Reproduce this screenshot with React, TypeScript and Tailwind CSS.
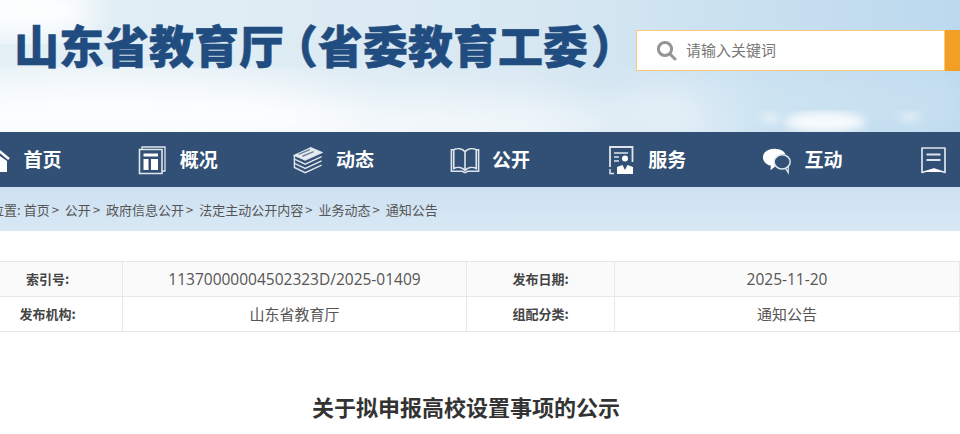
import React from "react";

const cjk = "font-['Noto_Sans_CJK_SC','Microsoft_YaHei',sans-serif]";

function Sky() {
  return (
    <svg className="absolute inset-0" width="960" height="132" viewBox="0 0 960 132" preserveAspectRatio="none">
      <defs>
        <linearGradient id="sky" x1="0" y1="0" x2="1" y2="0">
          <stop offset="0" stopColor="#e4f0f6" />
          <stop offset="0.55" stopColor="#d8e8f2" />
          <stop offset="1" stopColor="#bbd9ee" />
        </linearGradient>
        <filter id="b1"><feGaussianBlur stdDeviation="20" /></filter>
        <filter id="b2"><feGaussianBlur stdDeviation="4" /></filter>
        <filter id="b3"><feGaussianBlur stdDeviation="14" /></filter>
      </defs>
      <rect width="960" height="132" fill="url(#sky)" />
      <g filter="url(#b3)" fill="#ffffff">
        <ellipse cx="30" cy="10" rx="65" ry="28" opacity="0.95" />
      </g>
      <g filter="url(#b1)" fill="#ffffff">
        <ellipse cx="120" cy="115" rx="240" ry="40" opacity="0.9" />
        <ellipse cx="400" cy="125" rx="220" ry="30" opacity="0.7" />
        <ellipse cx="680" cy="115" rx="70" ry="25" opacity="0.55" />
      </g>
      <rect x="700" y="75" width="260" height="57" fill="#cfe5f3" opacity="0.55" filter="url(#b3)" />
      <g filter="url(#b2)" fill="#ffffff">
        <ellipse cx="825" cy="122" rx="40" ry="10" opacity="0.85" />
        <ellipse cx="770" cy="118" rx="10" ry="4" opacity="0.6" />
        <ellipse cx="910" cy="117" rx="11" ry="3.5" opacity="0.6" />
      </g>
    </svg>
  );
}

const W = "#dfe5ec";

const icons: Record<string, React.ReactNode> = {
  home: (
    <svg width="30" height="30" viewBox="0 0 30 30" fill="none">
      <path d="M6 14 L17 5 L28 14" stroke="#fff" strokeWidth="2.6" />
      <path d="M9 16 L17 9.5 L26 16 V27 H9 Z" fill="#fff" />
    </svg>
  ),
  overview: (
    <svg width="30" height="30" viewBox="0 0 30 30" fill="none" stroke={W} strokeWidth="1.3">
      <path d="M2.5 4.5 H25 V28.5 H2.5 Z" strokeWidth="1.6" />
      <path d="M5 4.5 V2 H28 V26 H25" />
      <path d="M6.5 8.5 H21 V11.5 H6.5 Z" fill="#fff" stroke="none" />
      <path d="M6.5 14 H11.5 V25 H6.5 Z" fill="#fff" stroke="none" />
      <path d="M14 14 H21 V25 H14 Z" fill="#fff" stroke="none" />
    </svg>
  ),
  stack: (
    <svg width="32" height="30" viewBox="0 0 32 30" fill="none" stroke={W} strokeWidth="1.5">
      <path d="M1.5 10 L19 2 L30.5 7 L13 15 Z" fill="#e8ecf1" />
      <path d="M6 9 L18 4 M10 11 L22 6" stroke="#6d839c" />
      <path d="M1.5 10 V14 L13 19.5 L30.5 11.5" />
      <path d="M1.5 14 V18.5 L13 24 L30.5 16" />
      <path d="M1.5 18.5 V23 L13 28.5 L30.5 20.5" />
    </svg>
  ),
  book: (
    <svg width="32" height="30" viewBox="0 0 32 30" fill="none" stroke={W} strokeWidth="1.7">
      <path d="M4 4 C8 2 13 3 16 6 C19 3 24 2 28 4 V24 C24 22 19 23 16 26 C13 23 8 22 4 24 Z" />
      <path d="M16 6 V26" />
      <path d="M4 4 H1.5 V27 H13 L16 28.5 L19 27 H30.5 V4 H28" />
    </svg>
  ),
  service: (
    <svg width="28" height="30" viewBox="0 0 28 30" fill="none" stroke={W} strokeWidth="1.5">
      <path d="M3 22 V2 H25.5 V17" strokeWidth="1.8" />
      <path d="M3 24 V28.5 H7" />
      <path d="M7 8 H21 M7 12 H12 M7 16 H12" />
      <circle cx="18" cy="13.5" r="3" fill="#fff" stroke="none" />
      <path d="M10 29 V22 L15.5 20 L18 25 L20.5 20 L26 22 V29 Z" fill="#fff" stroke="none" />
    </svg>
  ),
  talk: (
    <svg width="32" height="30" viewBox="0 0 32 30" fill="none">
      <path d="M13 3 C20 3 24 6 25 9 C18 8 12 13 13 19 L14 22 L9 26 L9.5 21 C4 20 1 16 1 12 C1 7 6 3 13 3 Z" fill="#fff" />
      <ellipse cx="21.5" cy="17" rx="8.5" ry="7.5" stroke={W} strokeWidth="1.6" />
      <path d="M25 24 L28 28.5 L28 21" stroke={W} strokeWidth="1.4" />
    </svg>
  ),
  doc: (
    <svg width="28" height="30" viewBox="0 0 28 30" fill="none" stroke={W} strokeWidth="1.7">
      <path d="M3 3 H26 V27.5 L15 24 L3 27.5 Z" strokeLinejoin="round" />
      <path d="M7.5 9.5 H21.5 M7.5 15 H21.5" strokeWidth="1.8" />
      <path d="M4 27 L15 23.5 L25 27 Z" fill="#fff" stroke="none" />
    </svg>
  ),
};

const nav = [
  { icon: "home", t: "首页" },
  { icon: "overview", t: "概况" },
  { icon: "stack", t: "动态" },
  { icon: "book", t: "公开" },
  { icon: "service", t: "服务" },
  { icon: "talk", t: "互动" },
  { icon: "doc", t: "专题" },
];

const crumbs = ["首页", "公开", "政府信息公开", "法定主动公开内容", "业务动态", "通知公告"];

function Label({ children }: { children: React.ReactNode }) {
  return (
    <td className="border border-[#e8e8e8] text-center text-[13px] font-bold text-[#444] p-0">
      <div className="leading-[20px]">{children}</div>
    </td>
  );
}
function Value({ children, mono }: { children: React.ReactNode; mono?: boolean }) {
  return (
    <td className="border border-[#e8e8e8] text-center text-[#555] p-0">
      {mono ? (
        <div className="font-['Open_Sans',sans-serif] text-[15.5px] leading-[20px]">{children}</div>
      ) : (
        <div className="text-[15px] leading-[20px]">{children}</div>
      )}
    </td>
  );
}

export default function App() {
  return (
    <div className={`w-[960px] h-[434px] overflow-hidden bg-white ${cjk}`}>
      <header className="relative h-[132px] overflow-hidden">
        <Sky />
        <div className="relative flex items-start">
          <h1 className="ml-[14px] mt-[15px] w-[610px] whitespace-nowrap text-[45px] leading-[60px] font-black text-[#214c80] [-webkit-text-stroke:0.5px_#214c80]">
            山东省教育厅<span className="-ml-[11px] mr-[6px] tracking-[-6px]">（</span>省委教育工委<span className="ml-[3px]">）</span>
          </h1>
          <div className="ml-[12px] mt-[30px] flex h-[41px] w-[340px] shrink-0">
            <div className="flex w-[309px] items-center border border-[#f8c878] bg-white pl-[19px]">
              <svg width="21" height="21" viewBox="0 0 21 21" fill="none">
                <circle cx="9" cy="9" r="6.6" stroke="#959595" strokeWidth="3" />
                <path d="M14 14 L19 19" stroke="#959595" strokeWidth="3" strokeLinecap="round" />
              </svg>
              <span className="ml-[9px] text-[15px] text-[#777]">请输入关键词</span>
            </div>
            <div className="w-[31px] bg-[#f2a025]" />
          </div>
        </div>
      </header>

      <nav className="flex h-[55px] items-center bg-[#325075] -ml-[19px]">
        {nav.map((n) => (
          <div key={n.t} className="flex w-[156.2px] shrink-0 items-center">
            <span className="flex w-[30px] shrink-0 justify-center">{icons[n.icon]}</span>
            <span className="ml-[12.5px] text-[19px] font-bold text-white whitespace-nowrap">{n.t}</span>
          </div>
        ))}
      </nav>

      <div className="flex h-[44px] items-center bg-[linear-gradient(180deg,#cde1f1,#d8e8f5)] pt-[2px] text-[13px] text-[#555] whitespace-nowrap">
        <span className="-ml-[9px] mr-[3px]">位置:</span>
        {crumbs.map((c, i) => (
          <span key={c} className="mr-[3px]">
            {c}
            {i < crumbs.length - 1 ? <span className="ml-[2px] mr-[3px]">&gt;</span> : null}
          </span>
        ))}
      </div>

      <table className="mt-[30px] -ml-[28px] h-[70px] w-[987px] table-fixed border-collapse">
        <colgroup>
          <col className="w-[150px]" />
          <col className="w-[344px]" />
          <col className="w-[148px]" />
          <col className="w-[345px]" />
        </colgroup>
        <tbody>
          <tr className="h-[35px] bg-[#fafafa]">
            <Label>索引号:</Label>
            <Value mono>11370000004502323D/2025-01409</Value>
            <Label>发布日期:</Label>
            <Value mono>2025-11-20</Value>
          </tr>
          <tr className="h-[35px]">
            <Label>发布机构:</Label>
            <Value>山东省教育厅</Value>
            <Label>组配分类:</Label>
            <Value>通知公告</Value>
          </tr>
        </tbody>
      </table>

      <h2 className="mt-[57px] w-[932px] text-center text-[22px] leading-[34px] font-bold text-[#333]">
        关于拟申报高校设置事项的公示
      </h2>
    </div>
  );
}
